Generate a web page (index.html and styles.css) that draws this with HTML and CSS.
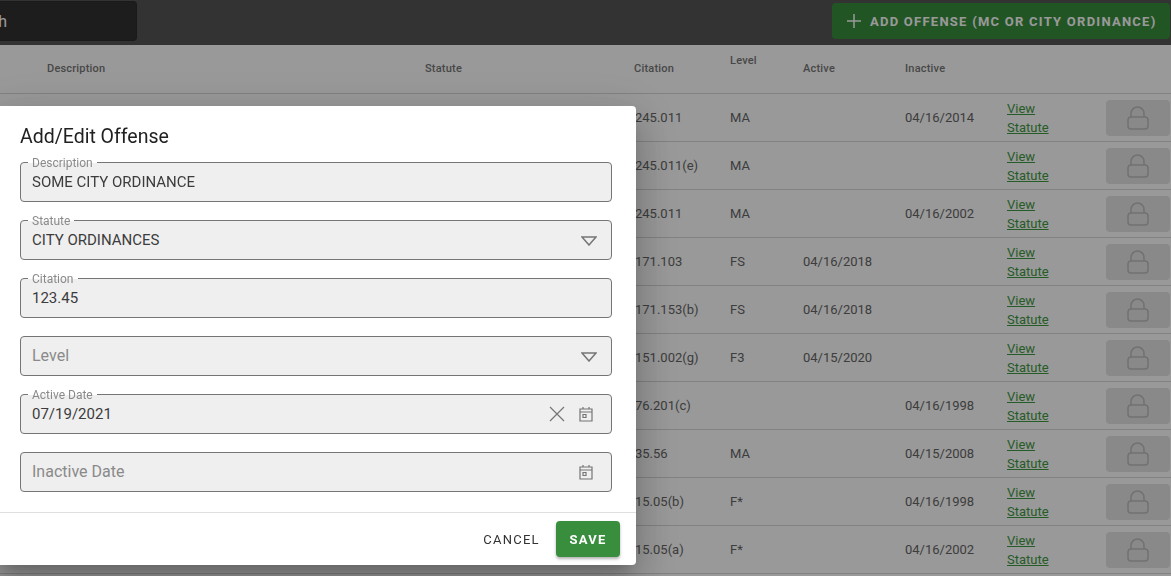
FILE: index.html
```html
<!DOCTYPE html>
<html lang="en">
<head>
<meta charset="utf-8">
<title>Offenses</title>
<link rel="stylesheet" href="styles.css">
</head>
<body>
<div class="page">
  <header class="toolbar">
    <div class="search"><span class="search-text">Search</span></div>
    <button class="add-btn" type="button">
      <svg class="plus" viewBox="0 0 16 16" width="16" height="16"><path d="M8 1v14M1 8h14"/></svg>
      ADD OFFENSE (MC OR CITY ORDINANCE)
    </button>
  </header>
  <section class="table">
    <div class="row head">
      <span></span><span>Description</span><span>Statute</span><span class="h-citation">Citation</span><span class="h-level">Level</span><span>Active</span><span>Inactive</span><span></span><span></span>
    </div>
    <div class="row"><span></span><span></span><span></span><span>245.011</span><span>MA</span><span></span><span>04/16/2014</span><a class="link" href="#">View Statute</a><span class="lock"><svg viewBox="0 0 22 24" width="22" height="24"><path d="M4 11V7.500a6.500 6.500 0 0 1 13 0V11"/><rect x="1" y="11" width="20" height="12" rx="3"/></svg></span></div>
    <div class="row"><span></span><span></span><span></span><span>245.011(e)</span><span>MA</span><span></span><span></span><a class="link" href="#">View Statute</a><span class="lock"><svg viewBox="0 0 22 24" width="22" height="24"><path d="M4 11V7.500a6.500 6.500 0 0 1 13 0V11"/><rect x="1" y="11" width="20" height="12" rx="3"/></svg></span></div>
    <div class="row"><span></span><span></span><span></span><span>245.011</span><span>MA</span><span></span><span>04/16/2002</span><a class="link" href="#">View Statute</a><span class="lock"><svg viewBox="0 0 22 24" width="22" height="24"><path d="M4 11V7.500a6.500 6.500 0 0 1 13 0V11"/><rect x="1" y="11" width="20" height="12" rx="3"/></svg></span></div>
    <div class="row"><span></span><span></span><span></span><span>171.103</span><span>FS</span><span>04/16/2018</span><span></span><a class="link" href="#">View Statute</a><span class="lock"><svg viewBox="0 0 22 24" width="22" height="24"><path d="M4 11V7.500a6.500 6.500 0 0 1 13 0V11"/><rect x="1" y="11" width="20" height="12" rx="3"/></svg></span></div>
    <div class="row"><span></span><span></span><span></span><span>171.153(b)</span><span>FS</span><span>04/16/2018</span><span></span><a class="link" href="#">View Statute</a><span class="lock"><svg viewBox="0 0 22 24" width="22" height="24"><path d="M4 11V7.500a6.500 6.500 0 0 1 13 0V11"/><rect x="1" y="11" width="20" height="12" rx="3"/></svg></span></div>
    <div class="row"><span></span><span></span><span></span><span>151.002(g)</span><span>F3</span><span>04/15/2020</span><span></span><a class="link" href="#">View Statute</a><span class="lock"><svg viewBox="0 0 22 24" width="22" height="24"><path d="M4 11V7.500a6.500 6.500 0 0 1 13 0V11"/><rect x="1" y="11" width="20" height="12" rx="3"/></svg></span></div>
    <div class="row"><span></span><span></span><span></span><span>76.201(c)</span><span></span><span></span><span>04/16/1998</span><a class="link" href="#">View Statute</a><span class="lock"><svg viewBox="0 0 22 24" width="22" height="24"><path d="M4 11V7.500a6.500 6.500 0 0 1 13 0V11"/><rect x="1" y="11" width="20" height="12" rx="3"/></svg></span></div>
    <div class="row"><span></span><span></span><span></span><span>35.56</span><span>MA</span><span></span><span>04/15/2008</span><a class="link" href="#">View Statute</a><span class="lock"><svg viewBox="0 0 22 24" width="22" height="24"><path d="M4 11V7.500a6.500 6.500 0 0 1 13 0V11"/><rect x="1" y="11" width="20" height="12" rx="3"/></svg></span></div>
    <div class="row"><span></span><span></span><span></span><span>15.05(b)</span><span>F*</span><span></span><span>04/16/1998</span><a class="link" href="#">View Statute</a><span class="lock"><svg viewBox="0 0 22 24" width="22" height="24"><path d="M4 11V7.500a6.500 6.500 0 0 1 13 0V11"/><rect x="1" y="11" width="20" height="12" rx="3"/></svg></span></div>
    <div class="row"><span></span><span></span><span></span><span>15.05(a)</span><span>F*</span><span></span><span>04/16/2002</span><a class="link" href="#">View Statute</a><span class="lock"><svg viewBox="0 0 22 24" width="22" height="24"><path d="M4 11V7.500a6.500 6.500 0 0 1 13 0V11"/><rect x="1" y="11" width="20" height="12" rx="3"/></svg></span></div>
  </section>
</div>

<div class="overlay"></div>

<div class="dialog">
  <h2 class="title">Add/Edit Offense</h2>
  <div class="fields">
    <div class="field"><span class="legend">Description</span><span class="value">SOME CITY ORDINANCE</span></div>
    <div class="field"><span class="legend">Statute</span><span class="value">CITY ORDINANCES</span>
      <svg class="icon caret" viewBox="0 0 16 10" width="16" height="10"><path d="M1 1h14L8 9z"/></svg></div>
    <div class="field"><span class="legend">Citation</span><span class="value">123.45</span></div>
    <div class="field"><span class="placeholder">Level</span>
      <svg class="icon caret" viewBox="0 0 16 10" width="16" height="10"><path d="M1 1h14L8 9z"/></svg></div>
    <div class="field"><span class="legend">Active Date</span><span class="value">07/19/2021</span>
      <svg class="icon clear" viewBox="0 0 16 16" width="16" height="16"><path d="M1 1l14 14M15 1L1 15"/></svg>
      <svg class="icon cal" viewBox="0 0 14 16" width="14" height="16"><path d="M1 3h12v12H1zM1 6h12M4 1v2M10 1v2M4 8.500h3v3H4z"/></svg></div>
    <div class="field"><span class="placeholder">Inactive Date</span>
      <svg class="icon cal" viewBox="0 0 14 16" width="14" height="16"><path d="M1 3h12v12H1zM1 6h12M4 1v2M10 1v2M4 8.500h3v3H4z"/></svg></div>
  </div>
  <footer class="actions">
    <button class="cancel" type="button">CANCEL</button>
    <button class="save" type="button">SAVE</button>
  </footer>
</div>
</body>
</html>
```

FILE: styles.css
```css
* { box-sizing: border-box; }
html, body { margin: 0; height: 100%; overflow: hidden; }
body { font-family: Roboto, "Liberation Sans", sans-serif; background: #fff; color: #666; }

.page { width: 1171px; height: 576px; overflow: hidden; }

.toolbar {
  height: 45px;
  background: #555;
  display: flex;
  justify-content: space-between;
  align-items: flex-start;
  padding: 1px 1px 0 0;
}
.search {
  width: 137px;
  height: 40px;
  background: #313131;
  border: 1px solid #2c2c2c;
  border-left: 0;
  border-radius: 0 4px 4px 0;
  display: flex;
  align-items: center;
  justify-content: flex-end;
  overflow: hidden;
  padding-right: 129px;
  white-space: nowrap;
}
.search-text { font-size: 16px; color: #fff; }

.add-btn {
  width: 338px;
  height: 36px;
  margin-top: 2px;
  background: #388e3c;
  color: #fff;
  border: 0;
  border-radius: 4px;
  display: flex;
  align-items: center;
  gap: 8px;
  padding: 0 0 0 14px;
  font: 700 13px Roboto, sans-serif;
  letter-spacing: 1.25px;
  white-space: nowrap;
}
.plus path { fill: none; stroke: #fff; stroke-width: 1.5; }

.row {
  display: grid;
  grid-template-columns: 47px 378px 210px 95px 73px 102px 102px 99px 65px;
  align-items: center;
  height: 48px;
  border-bottom: 1px solid #d8d8d8;
  font-size: 13px;
}
.row.head {
  height: 49px;
  padding-bottom: 2px;
  font-size: 11px;
  font-weight: 500;
  letter-spacing: .2px;
  color: #777;
}
.h-citation { margin-left: -1px; }
.h-level { align-self: start; padding-top: 9px; }

.link {
  color: #3f9a44;
  line-height: 19px;
  width: 60px;
  text-decoration: underline;
}
.lock {
  width: 64px;
  height: 36px;
  border-radius: 4px;
  background: #e4e4e4;
  display: flex;
  align-items: center;
  justify-content: center;
}
.lock svg { fill: none; stroke: #bdbdbd; stroke-width: 1.5; }

.overlay { position: fixed; inset: 0; background: rgba(0, 0, 0, .4); }

.dialog {
  position: fixed;
  left: -4px;
  top: 106px;
  width: 640px;
  height: 459px;
  background: #fff;
  border-radius: 4px;
  box-shadow: 0 11px 15px -7px rgba(0,0,0,.2), 0 24px 38px 3px rgba(0,0,0,.14), 0 9px 46px 8px rgba(0,0,0,.12);
  display: flex;
  flex-direction: column;
}
.title {
  margin: 0;
  padding: 19px 24px 0;
  height: 56px;
  font-size: 19.5px;
  line-height: 24px;
  font-weight: 400;
  color: #212121;
}
.fields {
  display: flex;
  flex-direction: column;
  gap: 18px;
  padding: 0 24px;
}
.field {
  position: relative;
  height: 40px;
  background: #efefef;
  border: 1px solid #757575;
  border-radius: 4px;
  display: flex;
  align-items: center;
  padding: 0 11px;
  gap: 14px;
}
.legend {
  position: absolute;
  left: 7px;
  top: -6px;
  padding: 0 4px;
  font-size: 12px;
  line-height: 13px;
  color: #8a8a8a;
  background: linear-gradient(#fff 45%, #efefef 45%);
}
.value { flex: 1; font-size: 15px; color: #3c3c3c; }
.placeholder { flex: 1; font-size: 16px; color: #8a8a8a; padding-bottom: 2px; }
.icon { flex: none; fill: none; stroke: #757575; stroke-width: 1.2; }
.caret { margin: 2px 3px 0 0; stroke-width: 1.5; }
.cal { margin-right: 7px; }

.actions {
  margin-top: 20px;
  border-top: 1px solid #e0e0e0;
  flex: 1;
  display: flex;
  justify-content: flex-end;
  align-items: flex-start;
  gap: 16px;
  padding: 8px 16px 0;
}
.cancel, .save {
  height: 36px;
  border: 0;
  border-radius: 4px;
  font-family: Roboto, sans-serif;
  font-size: 13px;
  letter-spacing: 1.25px;
}
.cancel { background: none; color: #333; padding: 0; width: 57px; font-weight: 400; }
.save {
  width: 64px;
  background: #388e3c;
  color: #fff;
  font-weight: 700;
  padding: 0;
  box-shadow: 0 2px 3px rgba(0,0,0,.3);
}
```
